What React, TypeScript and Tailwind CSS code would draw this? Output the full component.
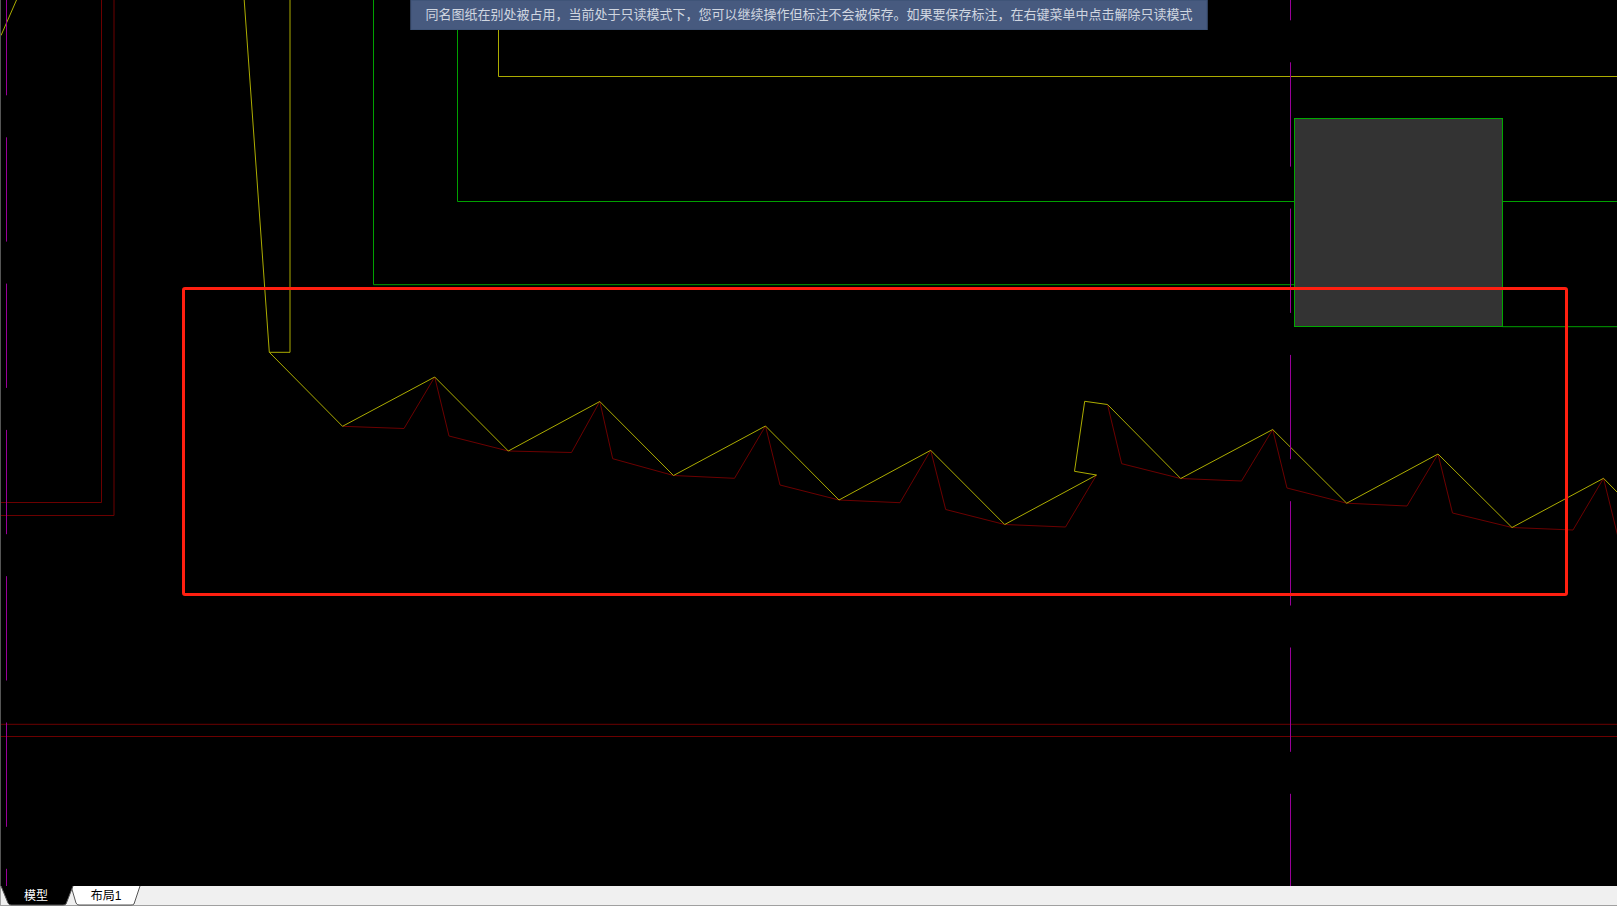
import { useState } from "react";

const YELLOW = "#acac00";
const DARK_RED = "#6c0000";
const GREEN = "#00a000";
const MAGENTA = "#990099";

const NOTICE =
  "同名图纸在别处被占用，当前处于只读模式下，您可以继续操作但标注不会被保存。如果要保存标注，在右键菜单中点击解除只读模式";

const SHEETS = [
  { id: "model", label: "模型", width: "w-[70px]", shape: "M0 0H72L65 18Q64 19 62 19H10Q8 19 7 17Z", edge: "M0 0L7 17Q8 19 10 19H62Q64 19 65 18L72 0" },
  { id: "layout1", label: "布局1", width: "w-[70px]", shape: "M0 0H69L63 18Q62 19 60 19H8Q6 19 5 17Z", edge: "M0 0L5 17Q6 19 8 19H60Q62 19 63 18L69 0" },
];

function Drawing() {
  return (
    <svg
      className="block h-full w-full"
      viewBox="0 0 1617 886"
      preserveAspectRatio="xMinYMin slice"
      fill="none"
      strokeWidth={1}
      role="img"
      aria-label="模型"
    >
      <g stroke={DARK_RED}>
        <path d="M101.5 0V502.5H0M114 0V515.5H0M0 724.3H1617M0 736.5H1617" />
        <path d="M342.5 426.3L404 428.5L434.7 377L449 436L508.3 451L571.5 452.5L599.8 401.5L612.7 458.7L673.5 475.5L734.5 478.3L765.5 426L780 485L839 500L900 502.7L930.7 450.3L945.7 509.5L1004.7 524.5L1065.5 527L1096.5 475" />
        <path d="M1107.5 404.5L1121.7 463.7L1180.7 478.5L1241.5 481L1272.7 429.5L1287 488L1346.7 503.2L1407 506L1438 454L1452.5 513L1512 527.5L1573 530L1603.5 478.3L1618 537" />
      </g>
      <g stroke={GREEN}>
        <path d="M373.5 0V284.7H1294.5M457.5 0V201.5H1294.5M1502.5 201.5H1617M1502.5 326.7H1617" />
      </g>
      <g stroke={YELLOW}>
        <path d="M498.5 0V76.5H1617M1 35.5L16.5 0" />
        <path d="M244.2 0L269.3 352.3H290V0" />
        <path d="M269.3 352.3L342.5 426.3L434.7 377L508.3 451L599.8 401.5L673.5 475.5L765.5 426L839 500L930.7 450.3L1004.7 524.5L1096.5 475L1074.5 471.3L1084.7 401.3L1107.5 404.5L1180.7 478.5L1272.7 429.5L1346.7 503.2L1438 454L1512 527.5L1603.5 478.3L1618 493" />
      </g>
      <g stroke={MAGENTA}>
        <path d="M6.5 -9V886M1290.5 -84V886" strokeDasharray="104.3 42" />
      </g>
      <rect x="1294.5" y="118.5" width="208" height="208" fill="#333333" stroke="#00a800" />
      <rect x="183.5" y="288.5" width="1383" height="306" rx="1.5" stroke="#ff1f10" strokeWidth={3} />
    </svg>
  );
}

export default function App() {
  const [active, setActive] = useState("model");

  return (
    <div className="flex h-screen flex-col overflow-hidden bg-black font-['Liberation_Sans','Noto_Sans_CJK_SC',sans-serif]">
      <main className="relative min-h-0 flex-1 overflow-hidden border-l border-[#555555]">
        <div className="-ml-px h-full">
          <Drawing />
        </div>
        <p
          role="status"
          className="absolute top-0 left-1/2 h-[30px] -translate-x-1/2 border border-[#3f5478] bg-[#475a7f] px-[14px] text-[13px] leading-7 whitespace-nowrap text-[#d0d6e0]"
        >
          {NOTICE}
        </p>
      </main>
      <nav className="flex h-5 shrink-0 border-b border-l border-[#a0a0a0] bg-[#f0f0f0]">
        {SHEETS.map((sheet) => {
          const on = sheet.id === active;
          return (
            <button
              key={sheet.id}
              type="button"
              aria-pressed={on}
              onClick={() => setActive(sheet.id)}
              className={`relative isolate h-full ${sheet.width} text-[12px] leading-5 ${on ? "z-10 text-white" : "text-black"}`}
            >
              <svg className="absolute inset-0 -z-10 h-full w-full overflow-visible" fill="none" aria-hidden="true">
                <path d={sheet.shape} fill={on ? "#000000" : "#ffffff"} />
                <path d={sheet.edge} stroke="#555555" />
              </svg>
              {sheet.label}
            </button>
          );
        })}
      </nav>
    </div>
  );
}
